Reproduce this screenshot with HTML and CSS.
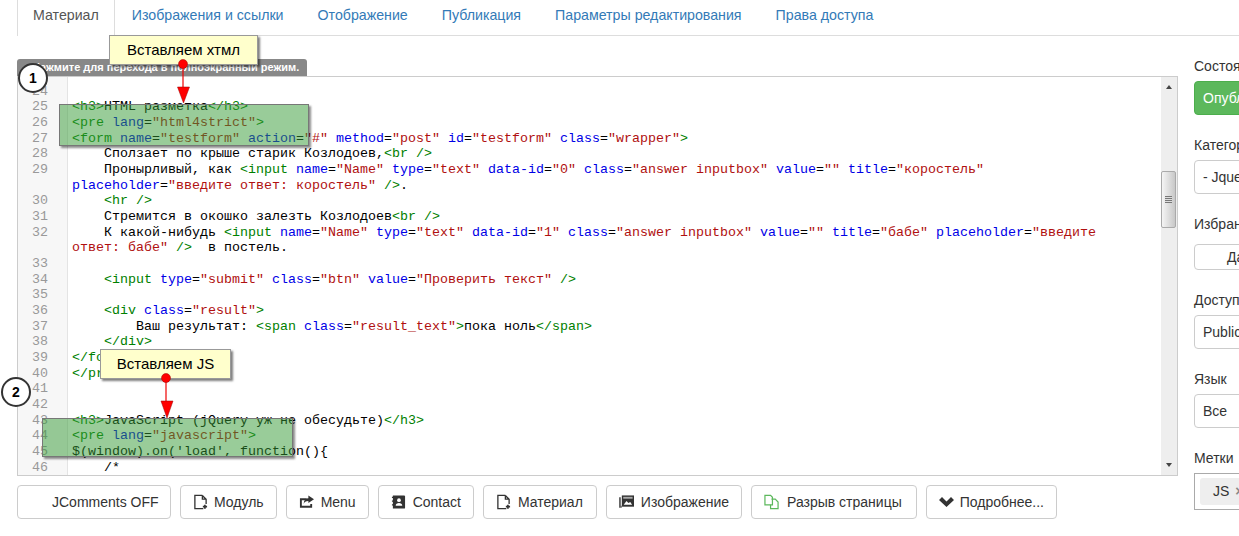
FILE: index.html
```html
<!DOCTYPE html>
<html lang="ru">
<head>
    <meta charset="UTF-8">
    <meta name="viewport" content="width=device-width, initial-scale=1.0">
    <title>Материал</title>
    <link rel="stylesheet" href="styles.css">
</head>
<body>
    <ul class="tabs">
        <li class="tab active">Материал</li>
        <li class="tab">Изображения и ссылки</li>
        <li class="tab">Отображение</li>
        <li class="tab">Публикация</li>
        <li class="tab">Параметры редактирования</li>
        <li class="tab">Права доступа</li>
    </ul>

    <div class="main">
        <div class="left">
            <div class="fs-hint">Нажмите для перехода в полноэкранный режим.</div>
            <div class="editor">
                <div class="code">
                    <div class="ln"><i>24</i><span></span></div>
                    <div class="ln"><i>25</i><span><b>&lt;h3&gt;</b>HTML разметка<b>&lt;/h3&gt;</b></span></div>
                    <div class="ln"><i>26</i><span><b>&lt;pre</b> <u>lang</u>=<s>"html4strict"</s><b>&gt;</b></span></div>
                    <div class="ln"><i>27</i><span><b>&lt;form</b> <u>name</u>=<s>"testform"</s> <u>action</u>=<s>"#"</s> <u>method</u>=<s>"post"</s> <u>id</u>=<s>"testform"</s> <u>class</u>=<s>"wrapper"</s><b>&gt;</b></span></div>
                    <div class="ln"><i>28</i><span>    Сползает по крыше старик Козлодоев,<b>&lt;br /&gt;</b></span></div>
                    <div class="ln"><i>29</i><span>    Пронырливый, как <b>&lt;input</b> <u>name</u>=<s>"Name"</s> <u>type</u>=<s>"text"</s> <u>data-id</u>=<s>"0"</s> <u>class</u>=<s>"answer inputbox"</s> <u>value</u>=<s>""</s> <u>title</u>=<s>"коростель"</s> <u>placeholder</u>=<s>"введите ответ: коростель"</s> <b>/&gt;</b>.</span></div>
                    <div class="ln"><i>30</i><span>    <b>&lt;hr /&gt;</b></span></div>
                    <div class="ln"><i>31</i><span>    Стремится в окошко залезть Козлодоев<b>&lt;br /&gt;</b></span></div>
                    <div class="ln"><i>32</i><span>    К какой-нибудь <b>&lt;input</b> <u>name</u>=<s>"Name"</s> <u>type</u>=<s>"text"</s> <u>data-id</u>=<s>"1"</s> <u>class</u>=<s>"answer inputbox"</s> <u>value</u>=<s>""</s> <u>title</u>=<s>"бабе"</s> <u>placeholder</u>=<s>"введите ответ: бабе"</s> <b>/&gt;</b>  в постель.</span></div>
                    <div class="ln"><i>33</i><span></span></div>
                    <div class="ln"><i>34</i><span>    <b>&lt;input</b> <u>type</u>=<s>"submit"</s> <u>class</u>=<s>"btn"</s> <u>value</u>=<s>"Проверить текст"</s> <b>/&gt;</b></span></div>
                    <div class="ln"><i>35</i><span></span></div>
                    <div class="ln"><i>36</i><span>    <b>&lt;div</b> <u>class</u>=<s>"result"</s><b>&gt;</b></span></div>
                    <div class="ln"><i>37</i><span>        Ваш результат: <b>&lt;span</b> <u>class</u>=<s>"result_text"</s><b>&gt;</b>пока ноль<b>&lt;/span&gt;</b></span></div>
                    <div class="ln"><i>38</i><span>    <b>&lt;/div&gt;</b></span></div>
                    <div class="ln"><i>39</i><span><b>&lt;/form&gt;</b></span></div>
                    <div class="ln"><i>40</i><span><b>&lt;/pre&gt;</b></span></div>
                    <div class="ln"><i>41</i><span></span></div>
                    <div class="ln"><i>42</i><span></span></div>
                    <div class="ln"><i>43</i><span><b>&lt;h3&gt;</b>JavaScript (jQuery уж не обесудьте)<b>&lt;/h3&gt;</b></span></div>
                    <div class="ln"><i>44</i><span><b>&lt;pre</b> <u>lang</u>=<s>"javascript"</s><b>&gt;</b></span></div>
                    <div class="ln"><i>45</i><span>$(window).on('load', function(){</span></div>
                    <div class="ln"><i>46</i><span>    /*</span></div>
                </div>
                <div class="scrollbar">
                    <div class="arrow-up"></div>
                    <div class="thumb"><div class="grip"></div></div>
                    <div class="arrow-down"></div>
                </div>
            </div>
            <div class="toolbar">
                <div class="btn btn-jc">JComments OFF</div>
                <div class="btn btn-module">
                    <svg class="ico" viewBox="0 0 16 16"><path d="M10 1H2v14h9M10 1l4 4v5M10 1v4h4" fill="none" stroke="#333" stroke-width="1.4"/><path d="M10.500 13h4.500M12.700 10.800v4.500" stroke="#333" stroke-width="1.8"/></svg>
                    Модуль
                </div>
                <div class="btn">
                    <svg class="ico" viewBox="0 0 16 16"><path d="M1 4h7v2H3v6h9v-2h2v4H1z" fill="#333"/><path d="M10 1l6 4-6 4V7C7 7 6 8 5 10c0-4 2-6 5-6z" fill="#333"/></svg>
                    Menu
                </div>
                <div class="btn">
                    <svg class="ico" viewBox="0 0 16 16"><path d="M2 1h12a1 1 0 011 1v12a1 1 0 01-1 1H2z" fill="#333"/><path d="M1 3h2M1 7h2M1 11h2" stroke="#333" stroke-width="1.2"/><circle cx="8.500" cy="6" r="2" fill="#fff"/><path d="M5 12c0-2 1.500-3 3.500-3s3.500 1 3.500 3z" fill="#fff"/></svg>
                    Contact
                </div>
                <div class="btn btn-article">
                    <svg class="ico" viewBox="0 0 16 16"><path d="M10 1H2v14h9M10 1l4 4v5M10 1v4h4" fill="none" stroke="#333" stroke-width="1.4"/><path d="M10.500 13h4.500M12.700 10.800v4.500" stroke="#333" stroke-width="1.8"/></svg>
                    Материал
                </div>
                <div class="btn">
                    <svg class="ico" viewBox="0 0 16 16"><path d="M0 3h2v9h1v2H0z" fill="#666"/><rect x="3" y="1" width="13" height="12" fill="#333"/><rect x="4.500" y="2.500" width="10" height="2" fill="#aaa"/><path d="M5 11l3-4 2 2 2-1 2 3z" fill="#fff"/></svg>
                    Изображение
                </div>
                <div class="btn btn-break">
                    <svg class="ico" viewBox="0 0 16 16"><path d="M1 1h6l2 2v8H1z" fill="#fff" stroke="#5cb85c" stroke-width="1.300"/><path d="M8 5h4l3 3v7H7v-4" fill="none" stroke="#5cb85c" stroke-width="1.300"/></svg>
                    Разрыв страницы
                </div>
                <div class="btn btn-more">
                    <svg class="ico-chevron" viewBox="0 0 15 10"><path d="M0 3L3 0l4.500 4.500L12 0l3 3-7.500 7z" fill="#333"/></svg>
                    Подробнее...
                </div>
            </div>
        </div>

        <div class="side">
            <div class="field">
                <label>Состояние</label>
                <div class="control control-green">Опубликовано</div>
            </div>
            <div class="field">
                <label>Категория</label>
                <div class="control">- Jquery</div>
            </div>
            <div class="field">
                <label>Избранное</label>
                <div class="control control-fav">Да</div>
            </div>
            <div class="field">
                <label>Доступ</label>
                <div class="control">Public</div>
            </div>
            <div class="field">
                <label>Язык</label>
                <div class="control">Все</div>
            </div>
            <div class="field">
                <label>Метки</label>
                <div class="tagbox"><span class="tag">JS<span class="tag-x">×</span></span></div>
            </div>
        </div>
    </div>

    <!-- пометки поверх скриншота -->
    <div class="hl hl-1"></div>
    <div class="hl hl-2"></div>

    <div class="num num-1">1</div>
    <div class="num num-2">2</div>

    <div class="note note-1">Вставляем хтмл</div>
    <div class="note note-2">Вставляем JS</div>

    <svg class="arrows" viewBox="0 0 1239 536">
        <g fill="#f00" stroke="#900" stroke-width="0.500">
            <line x1="183" y1="64" x2="183" y2="88" stroke="#e00" stroke-width="1.200"/>
            <circle cx="183" cy="64" r="4.500"/>
            <path d="M177.500 87h12l-6 16z"/>
            <line x1="166" y1="378" x2="166" y2="402" stroke="#e00" stroke-width="1.200"/>
            <circle cx="166" cy="378" r="4.500"/>
            <path d="M161 401h12l-6 17z"/>
        </g>
    </svg>
</body>
</html>
```

FILE: styles.css
```css
html, body {
    margin: 0;
    height: 536px;
    overflow: hidden;
}
body {
    position: relative;
    background-color: #fff;
    font-family: "Liberation Sans", Arial, sans-serif;
    font-size: 14px;
    color: #333;
}

/* tabs */
.tabs {
    display: flex;
    margin: 0 0 0 17px;
    padding: 0;
    height: 35px;
    list-style: none;
    border-bottom: 1px solid #ddd;
}
.tab {
    padding: 7px 17px 0;
    color: #337ab7;
    font-size: 14.2px;
    line-height: 16px;
}
.tab.active {
    color: #555;
    padding: 7px 15px 0;
    border-left: 1px solid #ddd;
    border-right: 1px solid #ddd;
    height: 36px;
    background-color: #fff;
    box-sizing: border-box;
}

.main {
    display: flex;
    padding-left: 17px;
}
.left {
    width: 1161px;
    flex: none;
    padding-top: 23px;
}

/* editor */
.fs-hint {
    display: block;
    box-sizing: border-box;
    height: 17px;
    line-height: 17px;
    padding-left: 15px;
    width: 290px;
    background-color: #888;
    color: #fff;
    font-size: 11px;
    font-weight: bold;
    border-radius: 3px 3px 0 0;
    white-space: nowrap;
    overflow: hidden;
}
.editor {
    display: flex;
    box-sizing: border-box;
    height: 400px;
    border: 1px solid #ccc;
    overflow: hidden;
    background: linear-gradient(to right, #f7f7f7 49px, #e4e4e4 49px, #e4e4e4 50px, #fff 50px);
}
.code {
    flex: 1;
    margin-top: 6.5px;
    font-family: "Liberation Mono", "Courier New", monospace;
    font-size: 13.33px;
    line-height: 15.67px;
    color: #000;
}
.ln {
    display: flex;
    min-height: 15.67px;
}
.ln i {
    flex: none;
    width: 30px;
    padding-right: 19px;
    text-align: right;
    font-style: normal;
    color: #999;
}
.ln span {
    flex: 1;
    padding-left: 5px;
    padding-right: 20px;
    white-space: pre-wrap;
}
.ln b {
    font-weight: normal;
    color: #008000;
}
.ln u {
    text-decoration: none;
    color: #0000e6;
}
.ln s {
    text-decoration: none;
    color: #b01010;
}

/* scrollbar */
.scrollbar {
    position: relative;
    flex: none;
    width: 16px;
    background-color: #eee;
}
.arrow-up, .arrow-down {
    position: absolute;
    left: 5px;
    width: 0;
    height: 0;
    border-left: 3px solid transparent;
    border-right: 3px solid transparent;
}
.arrow-up {
    top: 8px;
    border-bottom: 4px solid #444;
}
.arrow-down {
    bottom: 8px;
    border-top: 4px solid #444;
}
.thumb {
    position: absolute;
    top: 94px;
    left: 0;
    box-sizing: border-box;
    width: 15px;
    height: 57px;
    border: 1px solid #aaa;
    border-radius: 2px;
    background: linear-gradient(to right, #f5f5f5, #c8c8c8);
}
.grip {
    margin: 24px 3px 0;
    height: 7px;
    background: repeating-linear-gradient(to bottom, #777 0, #777 1px, #ddd 1px, #ddd 2px);
}

/* buttons under editor */
.toolbar {
    display: flex;
    gap: 9px;
    margin-top: 9px;
}
.btn {
    display: flex;
    align-items: center;
    gap: 7px;
    box-sizing: border-box;
    height: 34px;
    padding: 0 12px;
    border: 1px solid #ccc;
    border-radius: 4px;
    font-size: 14px;
    white-space: nowrap;
}
.btn-jc {
    padding: 0 12px 0 34px;
    width: 154px;
}
.btn-module {
    gap: 6px;
}
.btn-article {
    padding-right: 13px;
}
.btn-break {
    gap: 8px;
    padding-right: 14px;
}
.btn-more {
    gap: 6px;
}
.ico {
    width: 15px;
    height: 16px;
    flex: none;
}
.ico-chevron {
    width: 15px;
    height: 10px;
    flex: none;
}

/* right column */
.side {
    margin-left: 16px;
    padding-top: 20px;
    flex: none;
    width: 200px;
}
.field {
    margin-bottom: 20px;
}
.field label {
    display: block;
    height: 20px;
    line-height: 20px;
    margin-bottom: 5px;
}
.control {
    box-sizing: border-box;
    height: 34px;
    line-height: 32px;
    padding-left: 8px;
    border: 1px solid #ccc;
    border-radius: 4px;
}
.control-green {
    background-color: #5cb85c;
    border-color: #4cae4c;
    color: #fff;
}
.control-fav {
    height: 26px;
    line-height: 24px;
    margin-top: 10px;
    padding-left: 32px;
}
.tagbox {
    box-sizing: border-box;
    height: 37px;
    border: 1px solid #aaa;
    padding: 4px 5px;
}
.tag {
    display: inline-block;
    height: 27px;
    line-height: 27px;
    padding: 0 13px;
    background-color: #eee;
    border-radius: 3px;
    white-space: nowrap;
}
.tag-x {
    margin-left: 6px;
    font-weight: bold;
    color: #888;
}

/* annotations */
.hl {
    position: absolute;
    background-color: rgba(51, 153, 51, 0.5);
    border: 1px solid #777;
    box-shadow: 2px 2px 2px rgba(0, 0, 0, 0.45);
    box-sizing: border-box;
}
.hl-1 {
    left: 59px;
    top: 104px;
    width: 250px;
    height: 42px;
}
.hl-2 {
    left: 42px;
    top: 418px;
    width: 251px;
    height: 39px;
}
.num {
    position: absolute;
    box-sizing: border-box;
    width: 30px;
    height: 30px;
    border: 2px solid #333;
    border-radius: 50%;
    background-color: #fff;
    color: #000;
    font-size: 14px;
    font-weight: bold;
    line-height: 26px;
    text-align: center;
}
.num-1 {
    left: 18px;
    top: 63px;
}
.num-2 {
    left: 1px;
    top: 377px;
}
.note {
    position: absolute;
    box-sizing: border-box;
    height: 30px;
    line-height: 28px;
    background-color: #ffffcc;
    border: 1px solid #999;
    box-shadow: 2px 2px 2px rgba(0, 0, 0, 0.5);
    color: #000;
    font-size: 15px;
    text-align: center;
}
.note-1 {
    left: 109px;
    top: 35px;
    width: 149px;
}
.note-2 {
    left: 100px;
    top: 349px;
    width: 131px;
}
.arrows {
    position: absolute;
    left: 0;
    top: 0;
    width: 1239px;
    height: 536px;
    pointer-events: none;
}
```
